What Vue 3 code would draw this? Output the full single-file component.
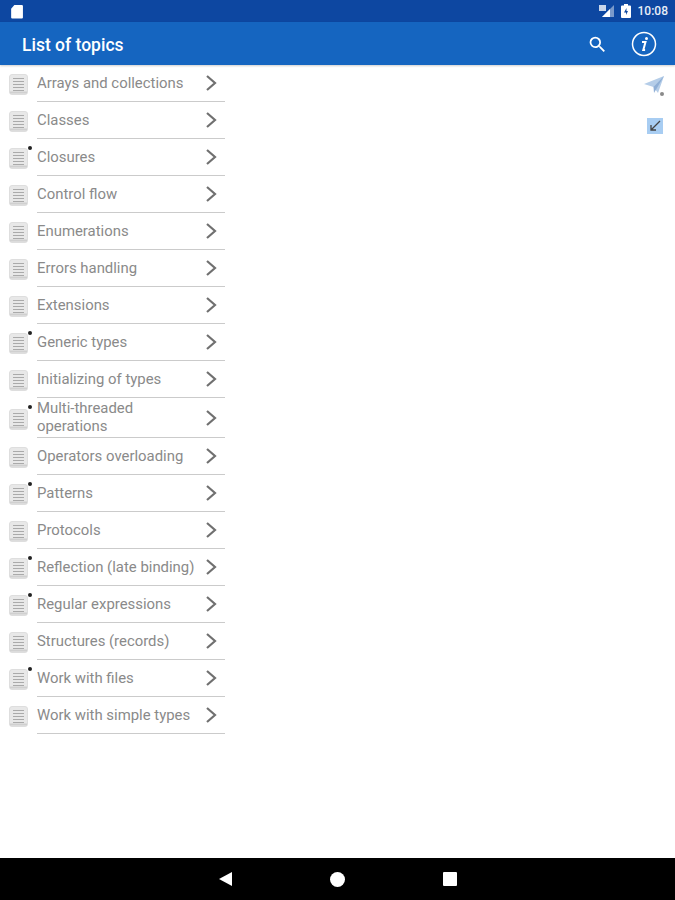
<script setup>
const topics = [
  { name: 'Arrays and collections' },
  { name: 'Classes' },
  { name: 'Closures', dot: true },
  { name: 'Control flow' },
  { name: 'Enumerations' },
  { name: 'Errors handling' },
  { name: 'Extensions' },
  { name: 'Generic types', dot: true },
  { name: 'Initializing of types' },
  { name: 'Multi-threaded operations', dot: true, tall: true },
  { name: 'Operators overloading' },
  { name: 'Patterns', dot: true },
  { name: 'Protocols' },
  { name: 'Reflection (late binding)', dot: true },
  { name: 'Regular expressions', dot: true },
  { name: 'Structures (records)' },
  { name: 'Work with files', dot: true },
  { name: 'Work with simple types' },
]
</script>

<template>
  <div class="screen">
    <header class="status">
      <svg class="sd" width="13" height="15" viewBox="0 0 12 14"><path d="M4 1h7a1 1 0 0 1 1 1v10.500a1 1 0 0 1-1 1H2a1 1 0 0 1-1-1V4.500z" fill="#fff"/></svg>
      <div class="status-right">
        <svg width="16" height="14" viewBox="0 0 16 14"><path d="M15 1v12H3z" fill="#fff" opacity=".45"/><path d="M11 5v8H3z" fill="#fff"/><rect x="0" y="1" width="7" height="6" fill="#c9d6ea"/></svg>
        <svg width="10" height="14" viewBox="0 0 10 14"><path d="M3 0h4v1.500h2a1 1 0 0 1 1 1V13a1 1 0 0 1-1 1H1a1 1 0 0 1-1-1V2.500a1 1 0 0 1 1-1h2z" fill="#fff"/><path d="M5.500 4 3 8.500h2V11l2-4H5.500z" fill="#0d47a1"/></svg>
        <span class="time">10:08</span>
      </div>
    </header>
    <div class="toolbar">
      <span class="title">List of topics</span>
      <svg class="search" width="21" height="21" viewBox="0 0 24 24"><path d="M15.500 14h-.79l-.28-.27A6.470 6.470 0 0 0 16 9.500 6.500 6.500 0 1 0 9.500 16c1.610 0 3.090-.59 4.230-1.570l.27.28v.79l5 4.990L20.490 19zm-6 0C7.010 14 5 11.990 5 9.500S7.010 5 9.500 5 14 7.010 14 9.500 11.990 14 9.500 14z" fill="#fff"/></svg>
      <svg class="info" width="26" height="26" viewBox="0 0 26 26"><circle cx="13" cy="13" r="11.500" fill="none" stroke="#fff" stroke-width="1.500"/><circle cx="15.500" cy="7.500" r="1.500" fill="#fff"/><path d="M11 11h3.500l-2.200 8h1.800" fill="none" stroke="#fff" stroke-width="2"/></svg>
    </div>
    <main class="content">
      <ul class="topics">
        <li v-for="t in topics" :key="t.name" class="topic" :class="{ tall: t.tall }">
          <span class="doc">
            <svg class="doc-icon" width="19" height="21" viewBox="0 0 19 21">
              <rect x=".5" y=".5" width="18" height="20" rx="2.500" fill="#e8e8e8" stroke="#dedede"/>
              <path d="M4 4.500h11M4 7.500h11M4 10.500h11M4 13.500h11M4 16.500h11" stroke="#aaa" stroke-width="1"/>
              <path d="M1 18.500h17" stroke="#d0d0d0" stroke-width="2"/>
            </svg>
            <i v-if="t.dot" class="dot"></i>
          </span>
          <div class="row">
            <span class="label">{{ t.name }}</span>
            <svg class="chev" width="12" height="18" viewBox="0 0 12 18"><path d="M2 2l8 7-8 7" fill="none" stroke="#707070" stroke-width="2.200"/></svg>
          </div>
        </li>
      </ul>
      <aside class="tools">
        <svg width="24" height="24" viewBox="0 0 24 24">
          <path d="M1 10 21 2 15 19 10.500 13z" fill="#b5cde8"/>
          <path d="M21 2 10.500 13 11 19z" fill="#8fafd6"/>
          <circle cx="19" cy="20" r="2" fill="#8a8a8a"/>
        </svg>
        <svg width="16" height="16" viewBox="0 0 16 16">
          <rect width="16" height="16" fill="#a8cdf2"/>
          <path d="M13 3 4 12M4 7v5h5" fill="none" stroke="#444" stroke-width="1.300"/>
        </svg>
      </aside>
    </main>
    <nav class="navbar">
      <svg width="14" height="14" viewBox="0 0 14 14"><path d="M14 0v14L1 7z" fill="#fff"/></svg>
      <svg width="15" height="15" viewBox="0 0 15 15"><circle cx="7.500" cy="7.500" r="7.500" fill="#fff"/></svg>
      <svg width="14" height="14" viewBox="0 0 14 14"><rect width="14" height="14" rx="1" fill="#fff"/></svg>
    </nav>
  </div>
</template>

<style>
html, body { margin: 0; }
</style>

<style scoped>
.screen {
  width: 675px;
  height: 900px;
  display: flex;
  flex-direction: column;
  background: #fff;
  font-family: Roboto, "Liberation Sans", sans-serif;
  overflow: hidden;
}
.status {
  height: 22px;
  flex: none;
  background: #0d47a1;
  display: flex;
  align-items: center;
  justify-content: space-between;
  padding: 0 7px 0 10px;
  color: #fff;
}
.status-right { display: flex; align-items: center; gap: 6px; }
.time { font-size: 12px; font-weight: 500; color: #e8eef7; margin-left: 1px; }
.toolbar {
  height: 43px;
  flex: none;
  background: #1565c0;
  display: flex;
  align-items: center;
  padding: 0 18px 0 22px;
  box-shadow: 0 1px 2px rgba(0, 0, 0, .2);
  z-index: 1;
}
.title { flex: 1; color: #fff; font-size: 17.500px; font-weight: 500; padding-top: 2px; }
.search { margin-top: 1px; }
.info { margin-left: 23px; }
.content { flex: 1; display: flex; justify-content: space-between; }
.topics { list-style: none; margin: 0; padding: 0; width: 225px; }
.topic { display: flex; height: 37px; align-items: stretch; }
.topic.tall { height: 40px; }
.doc {
  position: relative;
  width: 37px;
  flex: none;
  display: flex;
  align-items: center;
  padding: 2px 0 0 9px;
  box-sizing: border-box;
}
.doc-icon { filter: blur(.4px); }
.dot {
  position: absolute;
  left: 28px;
  top: 7px;
  width: 4px;
  height: 4px;
  border-radius: 50%;
  background: #222;
}
.row {
  flex: 1;
  display: flex;
  align-items: center;
  justify-content: space-between;
  border-bottom: 1px solid #cbcbcb;
  padding-right: 8px;
  box-sizing: border-box;
}
.label { font-size: 14.900px; line-height: 17.500px; color: #8a8a8a; width: 165px; margin-top: 2px; }
.tall .label { margin-top: 0; }
.tools {
  display: flex;
  flex-direction: column;
  align-items: center;
  gap: 20px;
  padding: 9px 8px 0 0;
}
.navbar {
  height: 42px;
  flex: none;
  background: #000;
  display: flex;
  align-items: center;
  justify-content: center;
  gap: 98px;
}
</style>
